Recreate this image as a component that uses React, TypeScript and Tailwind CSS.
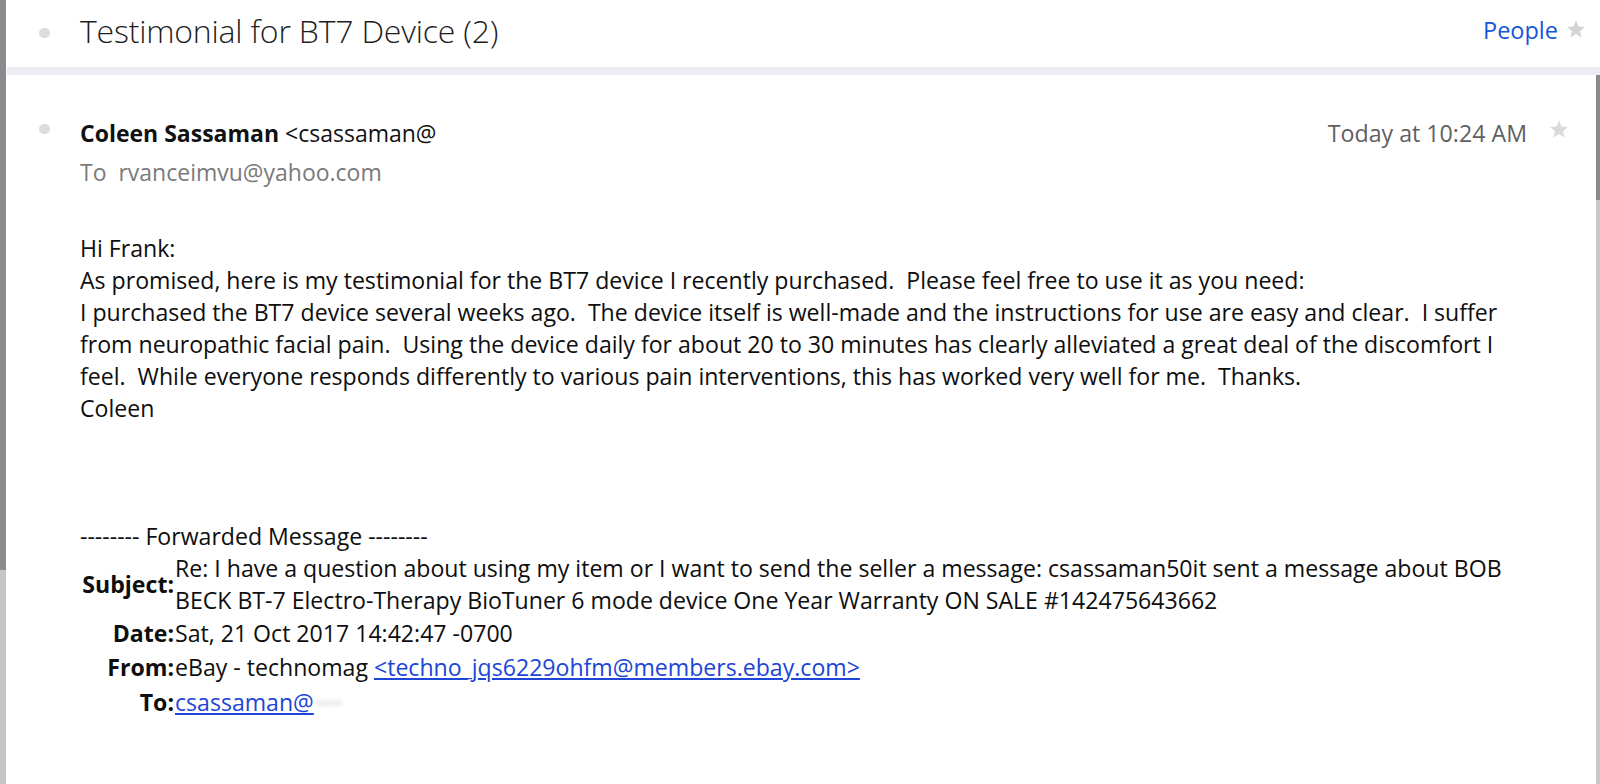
import React from 'react';

const StarIcon: React.FC<{ className?: string }> = ({ className }) => (
  <svg viewBox="0 0 24 24" className={className} fill="currentColor">
    <path d="M12 1.8l3.05 7.1 7.7.62-5.85 5.05 1.8 7.53L12 18.1l-6.7 4 1.8-7.53-5.85-5.05 7.7-.62z" />
  </svg>
);

const bodyLines = [
  'Hi Frank:',
  'As promised, here is my testimonial for the BT7 device I recently purchased.  Please feel free to use it as you need:',
  'I purchased the BT7 device several weeks ago.  The device itself is well-made and the instructions for use are easy and clear.  I suffer',
  'from neuropathic facial pain.  Using the device daily for about 20 to 30 minutes has clearly alleviated a great deal of the discomfort I',
  'feel.  While everyone responds differently to various pain interventions, this has worked very well for me.  Thanks.',
  'Coleen',
];

const App: React.FC = () => {
  return (
    <div className="w-full h-[784px] bg-white flex overflow-hidden font-['Open_Sans',sans-serif]">
      {/* left scroll edge */}
      <div className="w-[6px] flex flex-col shrink-0">
        <div className="h-[570px] bg-[#8b8b8f]" />
        <div className="flex-1 bg-[#c6c6ca]" />
      </div>

      <div className="flex-1 flex flex-col">
        {/* conversation header */}
        <div className="h-[67px] flex items-center pl-[33px] pr-[14px] pb-[6px]">
          <span className="w-[11px] h-[10px] rounded-full bg-[#dcdcdc] mt-[4px]" />
          <h1 className="ml-[30px] text-[32px] font-light text-[#1e1e1e] tracking-[-0.2px]">Testimonial for BT7 Device (2)</h1>
          <div className="ml-auto flex items-center gap-[8px]">
            <span className="text-[23.5px] text-[#1357d8]">People</span>
            <StarIcon className="w-[20px] h-[20px] text-[#d4d4d4] -mt-[4px]" />
          </div>
        </div>
        <div className="h-[8px] bg-[#ececf2] ml-[1px]" />

        <div className="flex-1 flex">
          <div className="flex-1 pl-[33px] pr-[27px] pt-[43px]">
            {/* message header */}
            <div className="flex items-center h-[30px]">
              <span className="w-[11px] h-[10px] rounded-full bg-[#dcdcdc] -mt-[8px]" />
              <div className="ml-[30px] text-[23px] text-[#111]">
                <span className="font-bold">Coleen Sassaman</span> <span>&lt;csassaman@</span>
              </div>
              <span className="ml-auto text-[23.2px] text-[#5f5f5f]">Today at 10:24 AM</span>
              <StarIcon className="ml-[22px] w-[20px] h-[20px] text-[#dadada] -mt-[8px]" />
            </div>
            <div className="ml-[41px] mt-[9px] text-[23px] text-[#7a7a7a] whitespace-pre leading-[30px]">To  rvanceimvu@yahoo.com</div>

            {/* body */}
            <div className="ml-[41px] mt-[45px] text-[23.1px] leading-[32px] text-[#0e0e0e] whitespace-pre">
              {bodyLines.map((l, i) => (
                <div key={i}>{l}</div>
              ))}
              <div className="h-[96px]" />
              <div>-------- Forwarded Message --------</div>

              <div className="grid grid-cols-[94px_1fr]">
                <div className="font-bold text-right flex items-center justify-end h-[64px]">Subject:</div>
                <div className="pl-[1px]">
                  <div>Re: I have a question about using my item or I want to send the seller a message: csassaman50it sent a message about BOB</div>
                  <div>BECK BT-7 Electro-Therapy BioTuner 6 mode device One Year Warranty ON SALE #142475643662</div>
                </div>
                <div className="font-bold text-right h-[34px] leading-[34px]">Date:</div>
                <div className="pl-[1px] h-[34px] leading-[34px]">Sat, 21 Oct 2017 14:42:47 -0700</div>
                <div className="font-bold text-right h-[35px] leading-[35px]">From:</div>
                <div className="pl-[1px] h-[35px] leading-[35px]">
                  eBay - technomag <span className="text-[#1d45d6] underline">&lt;techno_jqs6229ohfm@members.ebay.com&gt;</span>
                </div>
                <div className="font-bold text-right h-[35px] leading-[35px]">To:</div>
                <div className="pl-[1px] h-[35px] leading-[35px] flex items-center">
                  <span className="text-[#1d45d6] underline">csassaman@</span>
                  <span className="ml-[2px] w-[26px] h-[6px] bg-[#ececec] blur-[2px]" />
                </div>
              </div>
            </div>
          </div>

          {/* right scrollbar */}
          <div className="w-[4px] flex flex-col shrink-0">
            <div className="h-[125px] bg-[#8b8b8f]" />
            <div className="flex-1 bg-[#c8c8cc]" />
          </div>
        </div>
      </div>
    </div>
  );
};

export default App;
